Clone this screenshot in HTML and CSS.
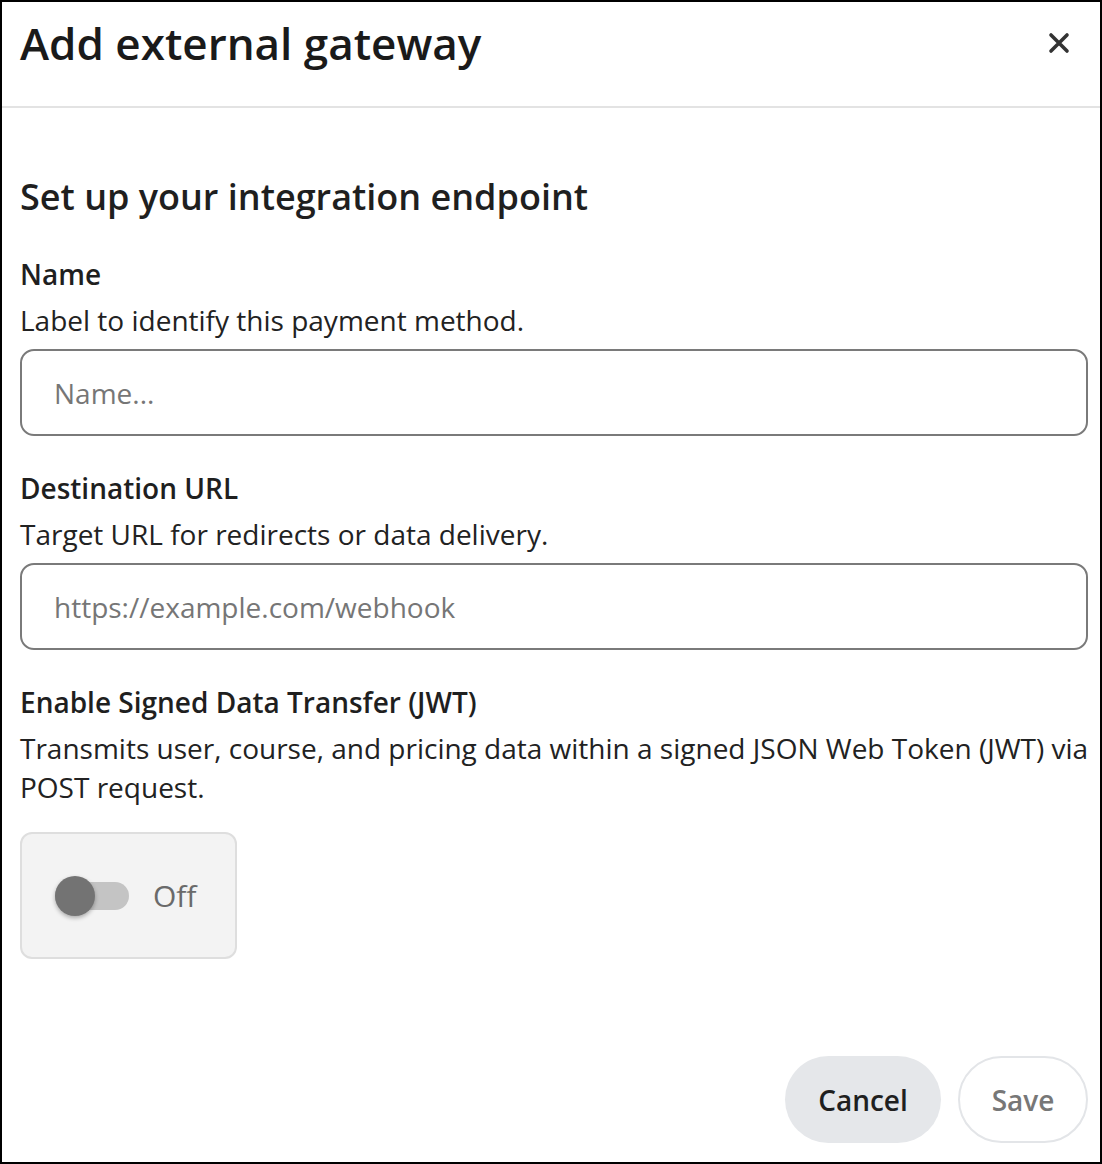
FILE: index.html
```html
<!DOCTYPE html>
<html lang="en">
<head>
    <meta charset="UTF-8">
    <meta name="viewport" content="width=device-width, initial-scale=1.0">
    <title>Add external gateway</title>
    <link rel="stylesheet" href="styles.css">
</head>
<body>

<div class="modal">
    <div class="modal-header">
        <h1>Add external gateway</h1>
        <button class="close-btn" aria-label="Close">
            <svg width="22" height="22" viewBox="0 0 22 22">
                <path d="M3 3 L19 19 M19 3 L3 19" stroke="#333" stroke-width="3.6" stroke-linecap="round"/>
            </svg>
        </button>
    </div>

    <div class="modal-body">
        <h2>Set up your integration endpoint</h2>

        <div class="field">
            <label class="field-label" for="name">Name</label>
            <div class="field-desc">Label to identify this payment method.</div>
            <input type="text" id="name" placeholder="Name...">
        </div>

        <div class="field">
            <label class="field-label" for="url">Destination URL</label>
            <div class="field-desc">Target URL for redirects or data delivery.</div>
            <input type="text" id="url" placeholder="https://example.com/webhook">
        </div>

        <div class="field">
            <div class="field-label">Enable Signed Data Transfer (JWT)</div>
            <div class="field-desc">Transmits user, course, and pricing data within a signed JSON Web Token (JWT) via POST request.</div>
            <div class="toggle-box">
                <span class="toggle">
                    <span class="toggle-knob"></span>
                </span>
                <span class="toggle-text">Off</span>
            </div>
        </div>
    </div>

    <div class="modal-footer">
        <button class="btn btn-cancel">Cancel</button>
        <button class="btn btn-save">Save</button>
    </div>
</div>

</body>
</html>
```

FILE: styles.css
```css
* {
    box-sizing: border-box;
}
body {
    margin: 0;
    font-family: "Open Sans", "Liberation Sans", sans-serif;
    color: #1f1f1f;
    background-color: #fff;
}
.modal {
    width: 1102px;
    height: 1164px;
    border: 2px solid #000;
    display: flex;
    flex-direction: column;
    background-color: #fff;
}
.modal-header {
    height: 106px;
    border-bottom: 2px solid #e3e3e3;
    display: flex;
    align-items: center;
    justify-content: space-between;
    padding: 0 30px 22px 18px;
}
.modal-header h1 {
    margin: 0;
    font-size: 44px;
    line-height: 56px;
    font-weight: 600;
    color: #1a1a1a;
}
.close-btn {
    background: none;
    border: none;
    padding: 0;
    cursor: pointer;
    display: flex;
}
.modal-body {
    padding: 67px 12px 0 18px;
}
.modal-body h2 {
    margin: 0 0 35px;
    font-size: 36px;
    line-height: 44px;
    font-weight: 600;
    color: #1f1f1f;
}
.field {
    margin-bottom: 32px;
}
.field-label {
    display: block;
    font-size: 28px;
    line-height: 40px;
    font-weight: 600;
    color: #1f1f1f;
    margin-bottom: 7px;
}
.field-desc {
    font-size: 28px;
    line-height: 39px;
    color: #222;
    margin: 0 -12px 9px 0;
}
input[type="text"] {
    width: 100%;
    height: 87px;
    border: 2px solid #7a7a7a;
    border-radius: 14px;
    padding: 0 32px;
    font-family: inherit;
    font-size: 28px;
    color: #222;
    outline: none;
}
input::placeholder {
    color: #767676;
}
.toggle-box {
    margin-top: 25px;
    width: 217px;
    height: 127px;
    background-color: #f3f3f3;
    border: 2px solid #dedede;
    border-radius: 12px;
    display: flex;
    align-items: center;
    padding-left: 33px;
    gap: 24px;
}
.toggle {
    position: relative;
    width: 74px;
    height: 28px;
    background-color: #c4c4c4;
    border-radius: 14px;
}
.toggle-knob {
    position: absolute;
    left: 0;
    top: -6px;
    width: 40px;
    height: 40px;
    border-radius: 50%;
    background-color: #737373;
    box-shadow: 0 2px 4px rgba(0, 0, 0, 0.3);
}
.toggle-text {
    font-size: 30px;
    color: #6a6a6a;
}
.modal-footer {
    margin-top: auto;
    display: flex;
    justify-content: flex-end;
    gap: 17px;
    padding: 0 12px 19px 0;
}
.btn {
    height: 87px;
    border-radius: 44px;
    font-family: inherit;
    font-size: 28px;
    font-weight: 600;
    cursor: pointer;
}
.btn-cancel {
    width: 156px;
    background-color: #e5e7ea;
    border: none;
    color: #1f1f1f;
}
.btn-save {
    width: 130px;
    background-color: #fff;
    border: 2px solid #e3e5e8;
    color: #777;
}
```
